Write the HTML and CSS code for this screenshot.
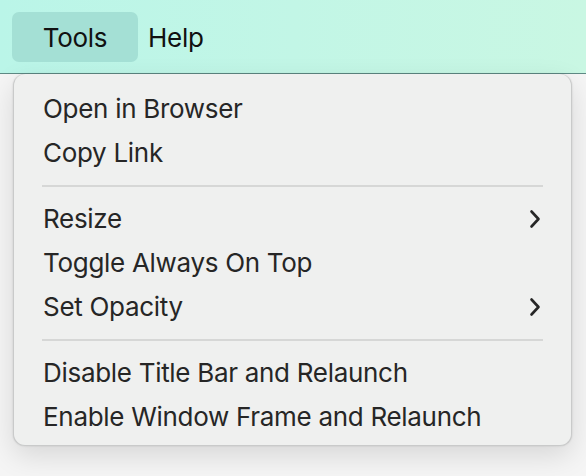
FILE: index.html
```html
<!DOCTYPE html>
<html>
<head>
<meta charset="utf-8">
<link rel="stylesheet" href="styles.css">
</head>
<body>
<div class="menubar">
  <div class="bar-item active">Tools</div>
  <div class="bar-item">Help</div>
</div>
<div class="menu">
  <div class="row">Open in Browser</div>
  <div class="row">Copy Link</div>
  <div class="sep"></div>
  <div class="row">Resize<svg class="chev" viewBox="0 0 12 20" width="12" height="20"><path d="M2.5 2.5 L9.5 10 L2.5 17.5" fill="none" stroke="#262626" stroke-width="2.6" stroke-linecap="round" stroke-linejoin="round"/></svg></div>
  <div class="row">Toggle Always On Top</div>
  <div class="row">Set Opacity<svg class="chev" viewBox="0 0 12 20" width="12" height="20"><path d="M2.5 2.5 L9.5 10 L2.5 17.5" fill="none" stroke="#262626" stroke-width="2.6" stroke-linecap="round" stroke-linejoin="round"/></svg></div>
  <div class="sep"></div>
  <div class="row">Disable Title Bar and Relaunch</div>
  <div class="row">Enable Window Frame and Relaunch</div>
</div>
</body>
</html>
```
FILE: styles.css
```css
html, body {
  margin: 0;
  padding: 0;
}
body {
  width: 586px;
  height: 476px;
  overflow: hidden;
  background: #f5f5f5;
  font-family: Inter, "Liberation Sans", sans-serif;
  color: #262626;
}
.menubar {
  height: 74px;
  box-sizing: border-box;
  padding: 12px 0 0 12px;
  display: flex;
  align-items: flex-start;
  gap: 10px;
  background: linear-gradient(90deg, #baf5e8 0%, #c2f6e6 50%, #c9f7e3 100%);
  border-bottom: 1px solid #5f8a85;
  font-size: 26px;
  color: #111;
}
.bar-item {
  height: 50px;
  line-height: 51px;
  letter-spacing: -0.3px;
}
.bar-item.active {
  width: 126px;
  text-align: center;
  background: #a4e0d5;
  border-radius: 7px;
}
.menu {
  margin-left: 13px;
  width: 559px;
  height: 372px;
  box-sizing: border-box;
  padding: 13px 0 7px 0;
  background: #eff0ef;
  border: 1px solid #c9caca;
  border-top: none;
  border-radius: 12px;
  box-shadow: 0 10px 28px rgba(0,0,0,0.12), 0 0 2px rgba(0,0,0,0.15);
  font-size: 26px;
  letter-spacing: -0.3px;
}
.row {
  height: 44px;
  line-height: 44px;
  padding: 0 30px 0 29px;
  display: flex;
  align-items: center;
  justify-content: space-between;
  white-space: nowrap;
}
.chev {
  display: block;
}
.sep {
  height: 22px;
  display: flex;
  align-items: center;
  padding: 0 28px 0 28px;
}
.sep::before {
  content: "";
  display: block;
  flex: 1;
  height: 2px;
  background: #d6d7d6;
}
```
